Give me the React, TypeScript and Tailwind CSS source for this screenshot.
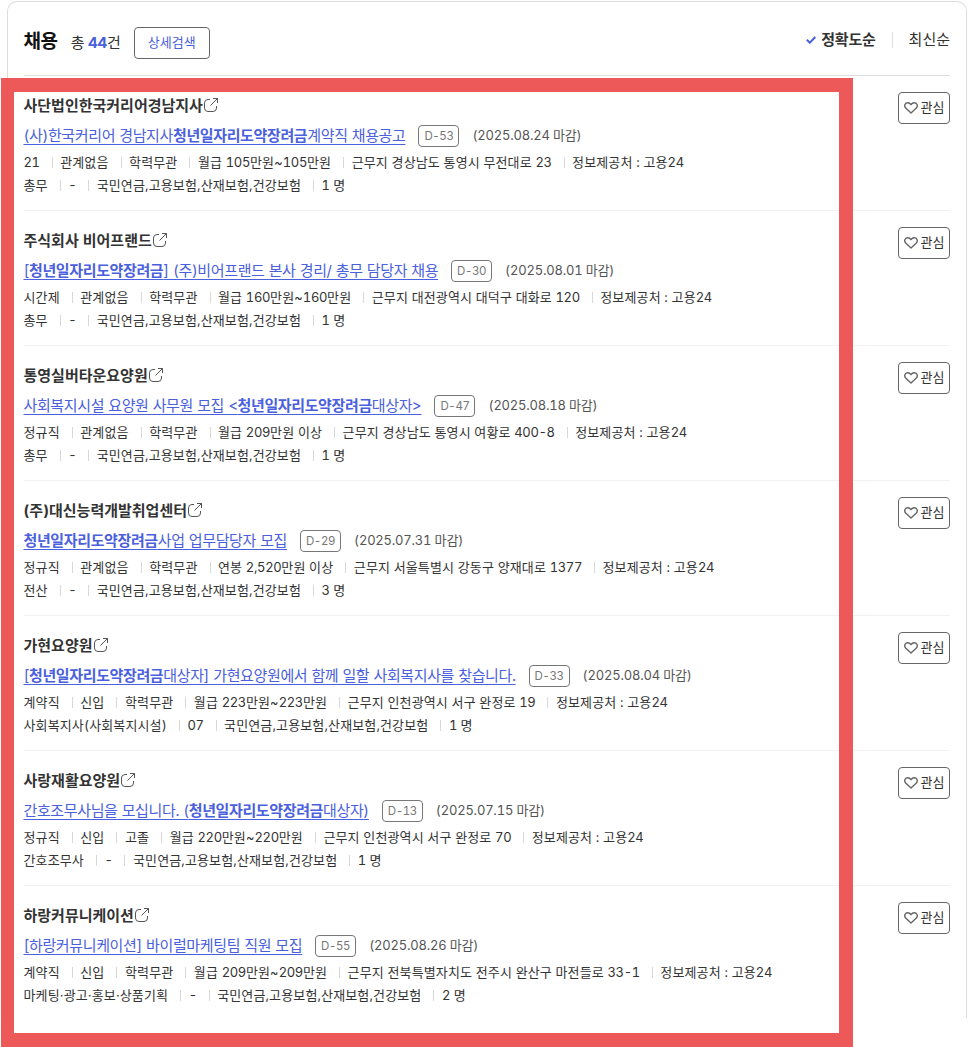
import { Fragment } from "react"

type Part = string | { mark: string }

interface Job {
  company: string
  title: Part[]
  dday: string
  deadline: string
  conditions: string[]
  details: string[]
}

const KEYWORD = { mark: "청년일자리도약장려금" }
const INSURANCE = "국민연금,고용보험,산재보험,건강보험"
const SOURCE = "정보제공처 : 고용24"

const jobs: Job[] = [
  {
    company: "사단법인한국커리어경남지사",
    title: ["(사)한국커리어 경남지사", KEYWORD, "계약직 채용공고"],
    dday: "D-53",
    deadline: "2025.08.24",
    conditions: ["21", "관계없음", "학력무관", "월급 105만원~105만원", "근무지 경상남도 통영시 무전대로 23", SOURCE],
    details: ["총무", "-", INSURANCE, "1 명"],
  },
  {
    company: "주식회사 비어프랜드",
    title: ["[", KEYWORD, "] (주)비어프랜드 본사 경리/ 총무 담당자 채용"],
    dday: "D-30",
    deadline: "2025.08.01",
    conditions: ["시간제", "관계없음", "학력무관", "월급 160만원~160만원", "근무지 대전광역시 대덕구 대화로 120", SOURCE],
    details: ["총무", "-", INSURANCE, "1 명"],
  },
  {
    company: "통영실버타운요양원",
    title: ["사회복지시설 요양원 사무원 모집 <", KEYWORD, "대상자>"],
    dday: "D-47",
    deadline: "2025.08.18",
    conditions: ["정규직", "관계없음", "학력무관", "월급 209만원 이상", "근무지 경상남도 통영시 여황로 400-8", SOURCE],
    details: ["총무", "-", INSURANCE, "1 명"],
  },
  {
    company: "(주)대신능력개발취업센터",
    title: [KEYWORD, "사업 업무담당자 모집"],
    dday: "D-29",
    deadline: "2025.07.31",
    conditions: ["정규직", "관계없음", "학력무관", "연봉 2,520만원 이상", "근무지 서울특별시 강동구 양재대로 1377", SOURCE],
    details: ["전산", "-", INSURANCE, "3 명"],
  },
  {
    company: "가현요양원",
    title: ["[", KEYWORD, "대상자] 가현요양원에서 함께 일할 사회복지사를 찾습니다."],
    dday: "D-33",
    deadline: "2025.08.04",
    conditions: ["계약직", "신입", "학력무관", "월급 223만원~223만원", "근무지 인천광역시 서구 완정로 19", SOURCE],
    details: ["사회복지사(사회복지시설)", "07", INSURANCE, "1 명"],
  },
  {
    company: "사랑재활요양원",
    title: ["간호조무사님을 모십니다. (", KEYWORD, "대상자)"],
    dday: "D-13",
    deadline: "2025.07.15",
    conditions: ["정규직", "신입", "고졸", "월급 220만원~220만원", "근무지 인천광역시 서구 완정로 70", SOURCE],
    details: ["간호조무사", "-", INSURANCE, "1 명"],
  },
  {
    company: "하랑커뮤니케이션",
    title: ["[하랑커뮤니케이션] 바이럴마케팅팀 직원 모집"],
    dday: "D-55",
    deadline: "2025.08.26",
    conditions: ["계약직", "신입", "학력무관", "월급 209만원~209만원", "근무지 전북특별자치도 전주시 완산구 마전들로 33-1", SOURCE],
    details: ["마케팅·광고·홍보·상품기획", "-", INSURANCE, "2 명"],
  },
]

function ExternalIcon() {
  return (
    <svg className="mb-[3px] ml-px h-[14px] w-[14px]" viewBox="0 0 14 14" fill="none" stroke="#555" strokeWidth="1">
      <path d="M6 1.500H4A3.500 3.500 0 0 0 .5 5v5A3.500 3.500 0 0 0 4 13.500h5a3.500 3.500 0 0 0 3.500-3.500V8" />
      <path d="m6.500 7.500 7-7M9 .5h4.500V5" />
    </svg>
  )
}

function HeartIcon() {
  return (
    <svg className="h-[12px] w-[14px]" viewBox="0 0 14 12" fill="none" stroke="#666" strokeWidth="1.4" strokeLinejoin="round">
      <path d="M7 11 1.900 6.300C-.6 3.600 1.300.8 3.800.8 5.300.8 6.300 1.600 7 2.700 7.700 1.600 8.700.8 10.200.8c2.500 0 4.400 2.800 1.900 5.500z" />
    </svg>
  )
}

// numbers are set a little tighter than the Hangul around them
function MetaText({ text }: { text: string }) {
  return (
    <span>
      {text.split(/(\d[\d,-]*)/).map((chunk, i) =>
        i % 2 === 1 ? (
          <span key={i} className="tracking-[-0.35px]">
            {chunk}
          </span>
        ) : (
          chunk
        )
      )}
    </span>
  )
}

function MetaRow({ items }: { items: string[] }) {
  return (
    <div className="flex h-[23px] items-center whitespace-pre text-[13px] tracking-[0.13px] text-[#333]">
      {items.map((item, i) => (
        <Fragment key={i}>
          {i > 0 && <i className="mr-[7.5px] ml-[12px] h-[11px] w-px bg-[#d8d8d8]" />}
          {item === "-" ? <span className="w-[8px] text-center">-</span> : <MetaText text={item} />}
        </Fragment>
      ))}
    </div>
  )
}

function JobItem({ job }: { job: Job }) {
  return (
    <li className="flex h-[135px] items-start justify-between border-b border-[#f1f1f1] pt-4 last:border-b-0">
      <div className="pt-px">
        <div className="flex h-[27px] items-center text-[15px] font-bold text-[#333]">
          {job.company}
          <ExternalIcon />
        </div>
        <div className="flex h-[31px] items-center">
          <a
            href="#"
            className="text-[15px] leading-[22px] tracking-[-0.37px] whitespace-pre text-[#4a60dc] underline underline-offset-[3px] [word-spacing:0.5px]"
          >
            {job.title.map((part, i) =>
              typeof part === "string" ? <Fragment key={i}>{part}</Fragment> : <strong key={i}>{part.mark}</strong>
            )}
          </a>
          <span className="ml-[13px] flex h-[22px] w-[41px] items-center justify-center rounded-[4px] border border-[#777] pt-[3px] text-[11.5px] tracking-[-0.4px] text-[#777]">
            {job.dday}
          </span>
          <span className="ml-[13px] pt-px text-[13px] tracking-[-0.2px] whitespace-pre text-[#555]">
            ({job.deadline} 마감)
          </span>
        </div>
        <MetaRow items={job.conditions} />
        <MetaRow items={job.details} />
      </div>
      <button className="flex h-8 w-[52px] items-center justify-center gap-[3px] rounded-[4px] border border-[#666] text-[13px] whitespace-nowrap text-[#333]">
        <HeartIcon />
        관심
      </button>
    </li>
  )
}

export default function App() {
  return (
    <div className="relative h-[1047px] w-[973px] overflow-hidden bg-white font-['Inter','Noto_Sans_CJK_KR',sans-serif] tabular-nums">
      <main className="mt-px ml-[7px] h-[1017px] w-[960px] rounded-t-[10px] border border-b-0 border-[#ddd] pr-4 pl-[15.5px]">
        <header className="flex h-[74px] items-center justify-between border-b border-[#ddd]">
          <div className="flex items-center pt-[9px]">
            <h2 className="pb-px text-[19px] font-bold tracking-[-0.4px] text-[#111]">채용</h2>
            <p className="ml-[13px] text-[15px] tracking-[-0.2px] text-[#333]">
              총 <strong className="text-[#4a60dc]">44</strong>건
            </p>
            <button className="ml-[13px] h-8 w-[76px] rounded-[4px] border border-[#666] text-[13px] text-[#4a60dc]">
              상세검색
            </button>
          </div>
          <div className="flex items-center pt-[3px] text-[15px] text-[#333]">
            <svg className="mr-[5px] h-[8px] w-[10px]" viewBox="0 0 10 8" fill="none" stroke="#4a60dc" strokeWidth="2">
              <path d="m.8 3.700 3 3L9.300 1" />
            </svg>
            <strong className="tracking-[-0.2px]">정확도순</strong>
            <i className="mx-4 h-4 w-px bg-[#ddd]" />
            <span>최신순</span>
          </div>
        </header>
        <ul>
          {jobs.map((job) => (
            <JobItem key={job.company} job={job} />
          ))}
        </ul>
      </main>
      {/* highlight frame over the result list */}
      <div className="pointer-events-none absolute top-[78px] left-px h-[969px] w-[852px] border-[14px] border-l-[13px] border-[#eb4747]/90" />
    </div>
  )
}
